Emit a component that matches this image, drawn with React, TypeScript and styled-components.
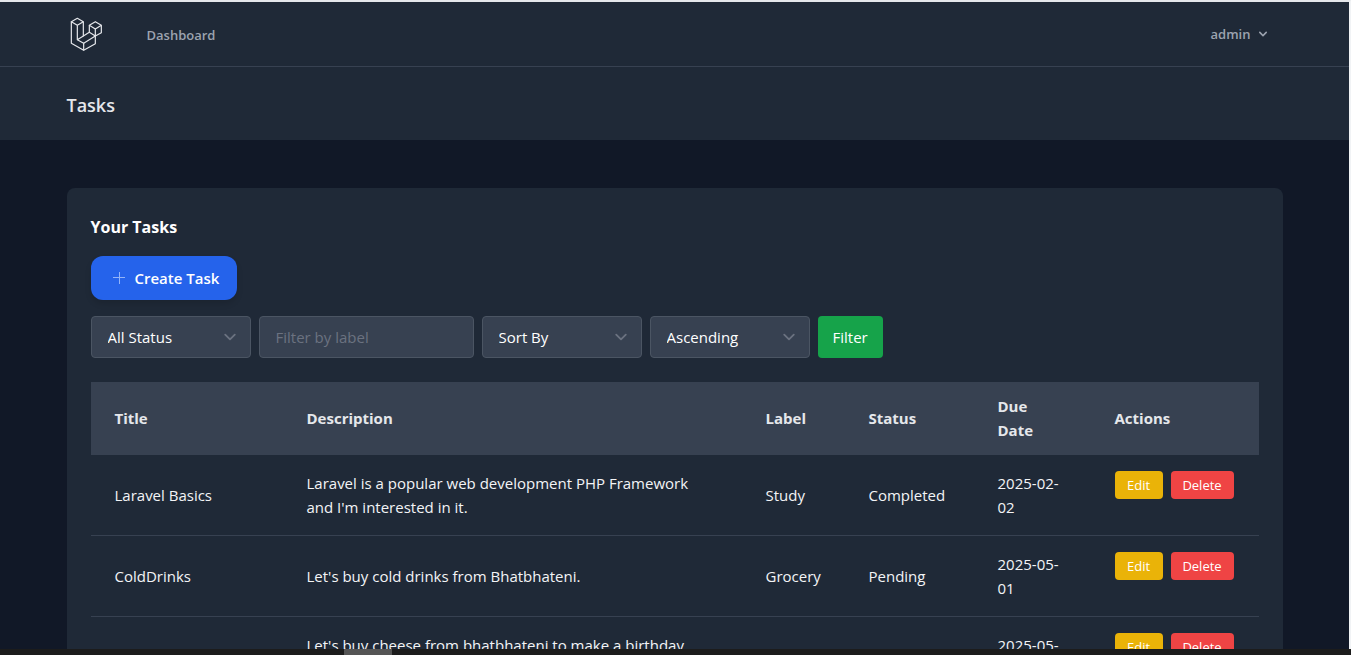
import React from "react";
import styled, { createGlobalStyle } from "styled-components";

const GlobalStyle = createGlobalStyle`
  *, *::before, *::after { box-sizing: border-box; }
  body {
    margin: 0;
    background: #111827;
    color: #f3f4f6;
    font: 400 15px/24px "Open Sans", "Noto Sans", sans-serif;
  }
  h1, h2 { margin: 0; }
  button, input, select { font: inherit; margin: 0; }
`;

const Screen = styled.div`
  height: 100vh;
  display: flex;
  flex-direction: column;
  overflow: hidden;
`;

const Page = styled.div`
  flex: 1;
  min-height: 0;
  overflow: hidden;
  border-top: 2px solid #e5e7eb;
  border-right: 2px solid #f1f3f5;
  background: #111827;
`;

const Container = styled.div`
  max-width: 1280px;
  margin: 0 auto;
  padding: 0 32px;
`;

const Nav = styled.nav`
  background: #1f2937;
  border-bottom: 1px solid #374151;
`;

const NavRow = styled(Container)`
  height: 64px;
  display: flex;
  align-items: center;
  gap: 44px;
`;

const LogoLink = styled.a`
  display: flex;
  color: #e5e7eb;
  padding-left: 3px;
`;

const NavLink = styled.a`
  padding-top: 2px;
  color: #9ca3af;
  font-size: 13px;
  font-weight: 600;
  line-height: 20px;
  text-decoration: none;
`;

const UserButton = styled.button`
  margin-left: auto;
  display: flex;
  align-items: center;
  gap: 4px;
  padding: 8px 12px;
  border: 0;
  background: transparent;
  color: #9ca3af;
  font-size: 13px;
  font-weight: 600;
  line-height: 20px;
`;

const PageHeader = styled.header`
  background: #1f2937;
`;

const PageTitle = styled.h1`
  padding: 26px 0 22px;
  color: #e5e7eb;
  font-size: 18px;
  font-weight: 600;
  line-height: 25px;
`;

const Main = styled(Container).attrs({ as: "main" })`
  padding-top: 48px;
  padding-bottom: 48px;
`;

const Card = styled.section`
  padding: 24px;
  border-radius: 8px;
  background: #1f2937;
`;

const CardTitle = styled.h2`
  padding-top: 2px;
  margin-bottom: 16px;
  color: #ffffff;
  font-size: 16px;
  font-weight: 700;
  line-height: 26px;
`;

const CreateLink = styled.a`
  display: inline-flex;
  align-items: center;
  gap: 8px;
  height: 44px;
  padding: 0 18px 0 20px;
  border-radius: 12px;
  background: #2563eb;
  box-shadow: 0 4px 6px rgba(0, 0, 0, 0.12);
  color: #ffffff;
  font-weight: 600;
  text-decoration: none;
`;

const Filters = styled.form`
  display: flex;
  gap: 8px;
  margin: 16px 0 24px;
`;

const SelectBox = styled.label`
  position: relative;
  width: 160px;
`;

const Select = styled.select`
  appearance: none;
  width: 100%;
  height: 42px;
  padding: 8px 40px 8px 16px;
  border: 1px solid #4b5563;
  border-radius: 4px;
  background: #374151;
  color: #ffffff;
`;

const SelectArrow = styled.svg`
  position: absolute;
  top: 9px;
  right: 9px;
  width: 24px;
  height: 24px;
  color: #6b7280;
  pointer-events: none;
`;

const LabelInput = styled.input`
  width: 215px;
  height: 42px;
  padding: 8px 16px;
  border: 1px solid #4b5563;
  border-radius: 4px;
  background: #374151;
  color: #ffffff;
  &::placeholder { color: #6b7280; opacity: 1; }
`;

const FilterButton = styled.button`
  height: 42px;
  padding: 0 15px;
  border: 0;
  border-radius: 4px;
  background: #16a34a;
  color: #ffffff;
`;

const Table = styled.table`
  width: 100%;
  table-layout: fixed;
  border-collapse: separate;
  border-spacing: 0;
`;

const Col = styled.col<{ $width?: number }>`
  width: ${({ $width }) => ($width ? `${$width}px` : "auto")};
`;

const HeadCell = styled.th`
  padding: 12px 24px;
  border-bottom: 1px solid #374151;
  background: #374151;
  color: #e5e7eb;
  font-weight: 700;
  text-align: left;
`;

const Cell = styled.td`
  padding: 16px 24px;
  border-bottom: 1px solid #374151;
`;

const ActionCell = styled(Cell)`
  vertical-align: top;
`;

const Actions = styled.div`
  display: flex;
  gap: 8px;
`;

const ActionButton = styled.button<{ $tone: "edit" | "delete" }>`
  width: ${({ $tone }) => ($tone === "edit" ? 48 : 63)}px;
  height: 28px;
  padding: 0;
  border: 0;
  border-radius: 4px;
  background: ${({ $tone }) => ($tone === "edit" ? "#eab308" : "#ef4444")};
  color: #ffffff;
  font-size: 13px;
  line-height: 20px;
`;

const BottomBar = styled.footer`
  flex: none;
  height: 6px;
  background: #1c1c1c;
`;

const BottomTab = styled.div`
  width: 48px;
  height: 6px;
  margin-left: 344px;
  background: #555555;
`;

const tasks = [
  { title: "Laravel Basics", description: "Laravel is a popular web development PHP Framework and I'm interested in it.", label: "Study", status: "Completed", due: "2025-02-02" },
  { title: "ColdDrinks", description: "Let's buy cold drinks from Bhatbhateni.", label: "Grocery", status: "Pending", due: "2025-05-01" },
  { title: "Cheese", description: "Let's buy cheese from bhatbhateni to make a birthday cake.", label: "Grocery", status: "Pending", due: "2025-05-02" },
];

const Logo = () => (
  <svg width="33" height="35" viewBox="12 8 99 105" fill="none" stroke="currentColor" strokeWidth="3.6" strokeLinejoin="round" aria-hidden="true">
    <path d="M34 12 52 22 34 33 16 22Z" />
    <path d="M16 22V87L53 108 88 88V65" />
    <path d="M34 33V76L53 87V108" />
    <path d="M52 22V66" />
    <path d="M34 76 70 54" />
    <path d="M53 87 88 65" />
    <path d="M88 22 106 33 88 44 70 33Z" />
    <path d="M70 33V54L88 65 106 55V33M88 44V65" />
  </svg>
);

const Dropdown = ({ label, options }: { label: string; options: string[] }) => (
  <SelectBox>
    <Select aria-label={label}>
      {options.map((o) => <option key={o}>{o}</option>)}
    </Select>
    <SelectArrow viewBox="0 0 20 20" fill="none" stroke="currentColor" strokeWidth="1.5" strokeLinecap="round" strokeLinejoin="round" aria-hidden="true">
      <path d="m6 8 4 4 4-4" />
    </SelectArrow>
  </SelectBox>
);

export default function App() {
  return (
    <Screen>
      <GlobalStyle />
      <Page>
        <Nav>
          <NavRow>
            <LogoLink href="#" aria-label="Home"><Logo /></LogoLink>
            <NavLink href="#">Dashboard</NavLink>
            <UserButton type="button">
              admin
              <svg width="16" height="16" viewBox="0 0 20 20" fill="currentColor" aria-hidden="true">
                <path fillRule="evenodd" d="M5.293 7.293a1 1 0 011.414 0L10 10.586l3.293-3.293a1 1 0 111.414 1.414l-4 4a1 1 0 01-1.414 0l-4-4a1 1 0 010-1.414z" />
              </svg>
            </UserButton>
          </NavRow>
        </Nav>
        <PageHeader>
          <Container><PageTitle>Tasks</PageTitle></Container>
        </PageHeader>
        <Main>
          <Card>
            <CardTitle>Your Tasks</CardTitle>
            <CreateLink href="#">
              <svg width="16" height="16" viewBox="0 0 16 16" stroke="#93b4f8" strokeWidth="1" aria-hidden="true">
                <path d="M2 7.500h12M8.500 2v12" />
              </svg>
              Create Task
            </CreateLink>
            <Filters>
              <Dropdown label="Status" options={["All Status", "Pending", "Completed"]} />
              <LabelInput type="text" placeholder="Filter by label" aria-label="Filter by label" />
              <Dropdown label="Sort by" options={["Sort By", "Title", "Due Date"]} />
              <Dropdown label="Order" options={["Ascending", "Descending"]} />
              <FilterButton type="button">Filter</FilterButton>
            </Filters>
            <Table>
              <colgroup>
                <Col $width={192} />
                <Col />
                <Col $width={103} />
                <Col $width={129} />
                <Col $width={117} />
                <Col $width={168} />
              </colgroup>
              <thead>
                <tr>
                  {["Title", "Description", "Label", "Status", "Due Date", "Actions"].map((h) => (
                    <HeadCell key={h} scope="col">{h}</HeadCell>
                  ))}
                </tr>
              </thead>
              <tbody>
                {tasks.map((t) => (
                  <tr key={t.title}>
                    <Cell>{t.title}</Cell>
                    <Cell>{t.description}</Cell>
                    <Cell>{t.label}</Cell>
                    <Cell>{t.status}</Cell>
                    <Cell>{t.due}</Cell>
                    <ActionCell>
                      <Actions>
                        <ActionButton type="button" $tone="edit">Edit</ActionButton>
                        <ActionButton type="button" $tone="delete">Delete</ActionButton>
                      </Actions>
                    </ActionCell>
                  </tr>
                ))}
              </tbody>
            </Table>
          </Card>
        </Main>
      </Page>
      <BottomBar><BottomTab /></BottomBar>
    </Screen>
  );
}
